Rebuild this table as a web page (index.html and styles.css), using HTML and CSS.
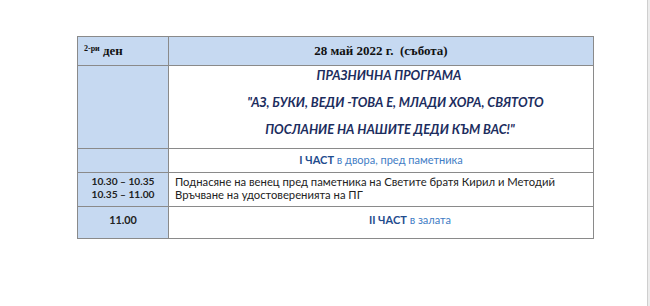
FILE: index.html
```html
<!DOCTYPE html>
<html lang="bg">
<head>
<meta charset="utf-8">
<link rel="stylesheet" href="styles.css">
</head>
<body>
<div class="page">
  <main class="doc">
    <table class="schedule">
      <colgroup>
        <col class="c-time">
        <col class="c-main">
      </colgroup>
      <tr class="r-head">
        <th class="day"><sup>2-ри</sup> ден</th>
        <th class="date">28 май 2022 г.&nbsp; (събота)</th>
      </tr>
      <tr class="r-prog">
        <td class="time"></td>
        <td class="prog">
          <p class="p1">ПРАЗНИЧНА ПРОГРАМА</p>
          <p class="p2">"АЗ, БУКИ, ВЕДИ -ТОВА Е, МЛАДИ ХОРА, СВЯТОТО</p>
          <p class="p3">ПОСЛАНИЕ НА НАШИТЕ ДЕДИ КЪМ ВАС!"</p>
        </td>
      </tr>
      <tr class="r-part">
        <td class="time"></td>
        <td class="part"><b>I ЧАСТ</b> в двора, пред паметника</td>
      </tr>
      <tr class="r-items">
        <td class="time">10.30 – 10.35<br>10.35 – 11.00</td>
        <td class="items">Поднасяне на венец пред паметника на Светите братя Кирил и Методий<br>Връчване на удостоверенията на ПГ</td>
      </tr>
      <tr class="r-part2">
        <td class="time time-last">11.00</td>
        <td class="part part2"><b>II ЧАСТ</b> в залата</td>
      </tr>
    </table>
  </main>
  <aside class="edge"></aside>
</div>
</body>
</html>
```
FILE: styles.css
```css
html, body {
  margin: 0;
  padding: 0;
  background: #ffffff;
}
.page {
  display: flex;
  width: 650px;
  height: 306px;
}
.doc {
  flex: 1;
  padding: 36px 0 0 77px;
}
.edge {
  width: 2px;
  background: #ececec;
  border-left: 1px solid #cfcfcf;
}
.schedule {
  border-collapse: collapse;
  width: 517px;
  table-layout: fixed;
  font-family: Lato, "Open Sans", sans-serif;
  font-size: 11px;
  color: #222;
}
.c-time { width: 91px; }
.schedule th,
.schedule td {
  border: 1px solid #8a8a8a;
  padding: 0 5px;
}
.schedule .r-head th {
  background: #c6d9f1;
  height: 28px;
  font-family: "Liberation Serif", serif;
  font-weight: bold;
  font-size: 13px;
  color: #111;
}
.schedule .day {
  text-align: left;
  padding-left: 6px;
}
.day sup {
  font-size: 8px;
  vertical-align: 4px;
}
.schedule .date { text-align: center; }
.schedule .time {
  background: #c6d9f1;
  text-align: center;
  font-weight: bold;
  font-size: 10.2px;
  line-height: 13.5px;
}
.schedule .time-last {
  font-size: 10.8px;
  padding-bottom: 6px;
}
.schedule .r-prog td { height: 80px; }
.schedule .prog {
  text-align: center;
  vertical-align: top;
  font-weight: bold;
  font-style: italic;
  font-size: 12.8px;
  color: #1c2d5e;
  padding-top: 2px;
}
.prog p { margin: 0 0 13px; line-height: 14px; }
.prog .p1 { padding-left: 16px; }
.prog .p2 { padding-left: 29px; }
.prog .p3 { padding-left: 18px; margin-bottom: 0; }
.schedule .r-part td { height: 21px; }
.schedule .part {
  text-align: center;
  color: #3f7dc5;
  padding-bottom: 2px;
}
.part b { color: #1f4c8e; }
.schedule .part2 {
  padding-left: 63px;
  padding-bottom: 6px;
}
.schedule .r-items td {
  height: 30px;
  padding-bottom: 3px;
}
.schedule .items {
  line-height: 13.5px;
  font-size: 11.25px;
  color: #222;
  padding-left: 6px;
  white-space: nowrap;
}
.schedule .r-part2 td { height: 25px; }
```
